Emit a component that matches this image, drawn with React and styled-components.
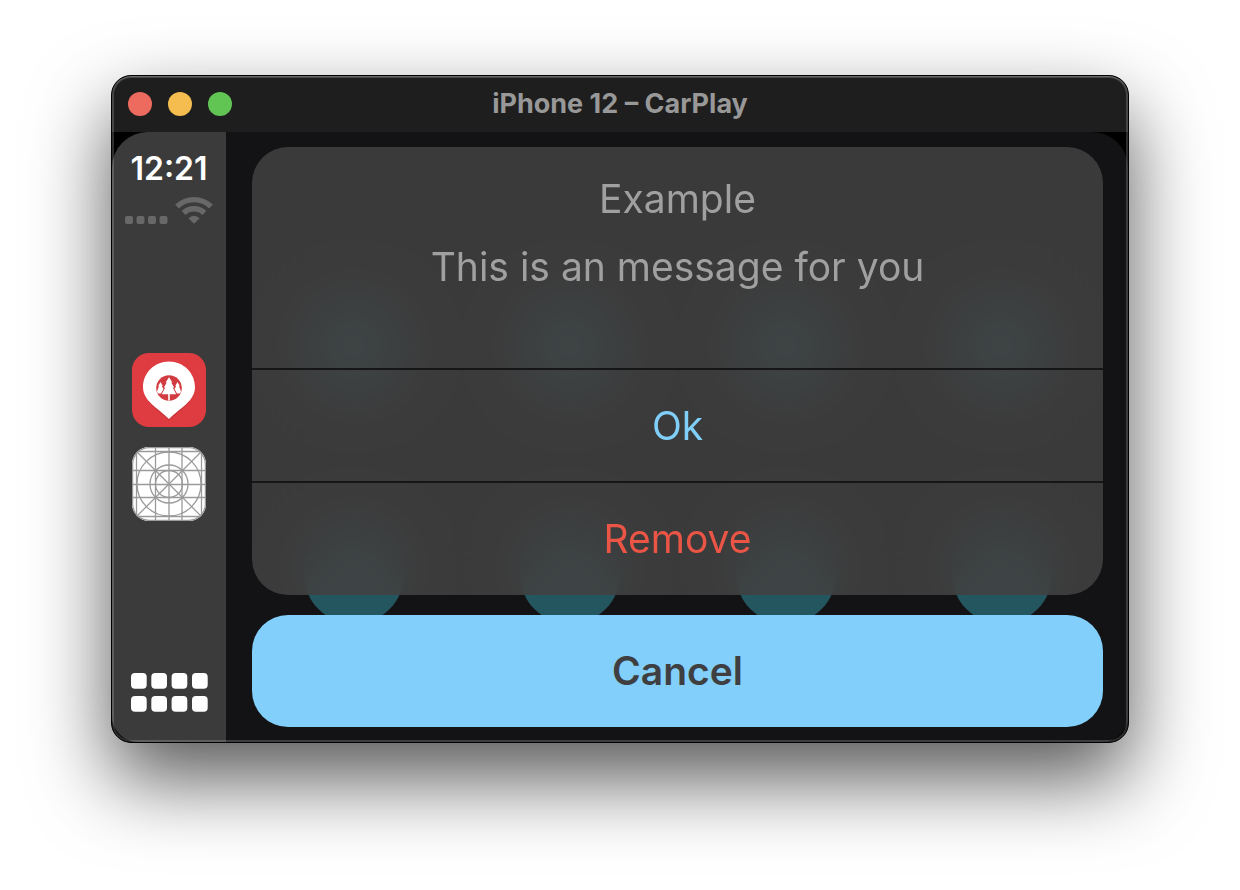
import React from "react";
import styled, { createGlobalStyle } from "styled-components";

const GlobalStyle = createGlobalStyle`
  *, *::before, *::after { box-sizing: border-box; }
  body {
    margin: 0;
    background: #fff;
    font-family: Inter, "Liberation Sans", sans-serif;
  }
  button {
    margin: 0;
    padding: 0;
    border: 0;
    background: none;
    font: inherit;
    color: inherit;
    cursor: pointer;
  }
  h1, h2, p { margin: 0; font-size: inherit; font-weight: inherit; }
  svg { display: block; }
`;

const Desktop = styled.main`
  min-height: 100vh;
  padding: 75px 111px 147px;
`;

const WindowShadow = styled.div`
  border-radius: 20px;
  box-shadow: 0 36px 80px rgba(0, 0, 0, 0.66);
`;

const Window = styled.section`
  position: relative;
  border: 1px solid #000;
  border-radius: 20px;
  background: #000;
  overflow: hidden;

  &::after {
    content: "";
    position: absolute;
    inset: 0;
    border-radius: 19px;
    box-shadow: inset 0 1px 0 rgba(255, 255, 255, 0.2),
      inset 0 0 0 2px rgba(255, 255, 255, 0.18);
    pointer-events: none;
  }
`;

const TitleBar = styled.header`
  display: grid;
  grid-template-columns: 1fr auto 1fr;
  align-items: center;
  height: 56px;
  padding: 0 16px;
  background: #1e1e1e;
`;

const TrafficLights = styled.div`
  display: flex;
  gap: 16px;
`;

const TrafficLight = styled.button`
  width: 24px;
  height: 24px;
  border-radius: 50%;
  background: ${(p) => p.$color};
`;

const WindowTitle = styled.h1`
  font-size: 27px;
  line-height: 32px;
  font-weight: 700;
  color: #989898;
`;

const Screen = styled.div`
  display: flex;
  border-radius: 36px 36px 26px 26px;
  overflow: hidden;
  background: #131315;
`;

const Sidebar = styled.aside`
  flex: none;
  display: flex;
  flex-direction: column;
  align-items: center;
  justify-content: space-between;
  width: 114px;
  padding: 19px 0 30px;
  background: #3b3b3b;
`;

const Status = styled.div`
  display: flex;
  flex-direction: column;
  align-items: center;
  gap: 9px;
`;

const Clock = styled.time`
  font-size: 32px;
  line-height: 36px;
  font-weight: 600;
  color: #fff;
`;

const Connectivity = styled.div`
  display: flex;
  align-items: flex-end;
  gap: 7px;
`;

const RecentApps = styled.nav`
  display: flex;
  flex-direction: column;
  gap: 20px;
  padding-bottom: 24px;
`;

const AppButton = styled.button`
  width: 74px;
  height: 74px;
  border-radius: 17px;
  overflow: hidden;
`;

const Stage = styled.div`
  flex: 1;
  display: grid;
  min-width: 0;
`;

const HomeGrid = styled.div`
  grid-area: 1 / 1;
  display: grid;
  grid-template-columns: repeat(4, 1fr);
  align-content: start;
  justify-items: center;
  row-gap: 128px;
  padding: 164px 18px 0 20px;
`;

const HomeTile = styled.span`
  width: 100px;
  height: 100px;
  border-radius: 50%;
  background: #24565f;
`;

const ActionSheet = styled.div`
  grid-area: 1 / 1;
  display: flex;
  flex-direction: column;
  gap: 20px;
  min-width: 0;
  padding: 15px 25px 15px 26px;
`;

const Panel = styled.div`
  padding-bottom: 1px;
  border-radius: 36px;
  overflow: hidden;
  background: rgba(67, 66, 66, 0.85);
  backdrop-filter: blur(28px);
`;

const Message = styled.div`
  display: flex;
  flex-direction: column;
  align-items: center;
  gap: 20px;
  min-height: 221px;
  padding: 28px 24px;
  font-size: 39px;
  line-height: 48px;
  text-align: center;
  color: #a0a0a0;
`;

const Action = styled.button`
  display: block;
  width: 100%;
  height: 113px;
  border-top: 2px solid #161616;
  font-size: 39px;
  line-height: 48px;
  color: ${(p) => (p.$destructive ? "#eb5545" : "#7fcff9")};
`;

const CancelButton = styled.button`
  height: 112px;
  border-radius: 36px;
  background: #81cffa;
  font-size: 39px;
  line-height: 48px;
  font-weight: 600;
  color: #3f3f41;
`;

const SignalIcon = () => (
  <svg width="43" height="8" viewBox="0 0 43 8" fill="#686868" aria-label="No signal">
    <rect width="8" height="8" rx="2" />
    <rect x="11.5" width="8" height="8" rx="2" />
    <rect x="23" width="8" height="8" rx="2" />
    <rect x="34.5" width="8" height="8" rx="2" />
  </svg>
);

const WifiIcon = () => (
  <svg width="38" height="28" viewBox="0 0 38 28" aria-label="Wi-Fi">
    <g fill="none" stroke="#686868" strokeWidth="5.4">
      <path d="M2 10.5 A24.5 24.5 0 0 1 36 10.5" />
      <path d="M8.6 17 A15 15 0 0 1 29.4 17" />
    </g>
    <path fill="#686868" d="M13.4 22.2 Q19 17.2 24.6 22.2 L19 27.8 Z" />
  </svg>
);

const ParkIcon = () => (
  <svg width="74" height="74" viewBox="0 0 74 74">
    <rect width="74" height="74" fill="#de3c40" />
    <path
      fill="#b42a30"
      opacity=".45"
      d="M16 48 C22 56 30 61 37 67.5 C44 61 52 56 58 48 Z"
    />
    <path
      fill="#fff"
      d="M37 8.5 C22.5 8.5 11 20 11 34 C11 48 26 55 37 66 C48 55 63 48 63 34 C63 20 51.5 8.5 37 8.5 Z"
    />
    <circle cx="37" cy="35" r="12.8" fill="#d23b40" />
    <g fill="#fff">
      <path d="M37 24.2 L40.4 29.5 H39.2 L42.2 34.5 H40.8 L44.2 41.2 H37.8 V47.5 H36.2 V41.2 H29.8 L33.2 34.5 H31.8 L34.8 29.5 H33.6 Z" />
      <path d="M28.5 29 L30.8 33 H29.8 L31.5 36 L29 40.5 H25.8 L25 38.5 L27 33 H26.2 Z" />
      <path d="M45.5 29 L43.2 33 H44.2 L42.5 36 L45 40.5 H48.2 L49 38.5 L47 33 H47.8 Z" />
    </g>
  </svg>
);

const TemplateIcon = () => (
  <svg width="74" height="74" viewBox="0 0 74 74">
    <rect width="74" height="74" fill="#fff" />
    <g fill="none" stroke="#9a9a9a" strokeWidth="1.3">
      <rect x=".6" y=".6" width="72.8" height="72.8" rx="16.5" />
      <path d="M4.5 0V74M23.5 0V74M37 0V74M50 0V74M69.5 0V74" />
      <path d="M0 4.5H74M0 23.5H74M0 37.5H74M0 50.5H74M0 69.5H74" />
      <path d="M4 4 L70 70 M70 4 L4 70" />
      <circle cx="37" cy="37" r="32" />
      <circle cx="37" cy="37" r="19" />
      <circle cx="37" cy="37" r="13.5" />
    </g>
  </svg>
);

const DashboardIcon = () => (
  <svg width="77" height="39" viewBox="0 0 77 39" fill="#fff">
    {[0, 23].map((y) =>
      [0, 20.3, 40.6, 61].map((x) => (
        <rect key={`${x}-${y}`} x={x} y={y} width="15.7" height="15.7" rx="4" />
      ))
    )}
  </svg>
);

const homeTiles = [1, 2, 3, 4, 5, 6, 7, 8];

export default function App() {
  return (
    <>
      <GlobalStyle />
      <Desktop>
        <WindowShadow>
          <Window>
            <TitleBar>
              <TrafficLights>
                <TrafficLight $color="#ed6a5e" aria-label="Close" />
                <TrafficLight $color="#f5bd4f" aria-label="Minimize" />
                <TrafficLight $color="#61c554" aria-label="Zoom" />
              </TrafficLights>
              <WindowTitle>iPhone 12 – CarPlay</WindowTitle>
            </TitleBar>
            <Screen>
              <Sidebar>
                <Status>
                  <Clock>12:21</Clock>
                  <Connectivity>
                    <SignalIcon />
                    <WifiIcon />
                  </Connectivity>
                </Status>
                <RecentApps aria-label="Recent apps">
                  <AppButton aria-label="Parks">
                    <ParkIcon />
                  </AppButton>
                  <AppButton aria-label="Example app">
                    <TemplateIcon />
                  </AppButton>
                </RecentApps>
                <button aria-label="Dashboard">
                  <DashboardIcon />
                </button>
              </Sidebar>
              <Stage>
                <HomeGrid aria-hidden="true">
                  {homeTiles.map((tile) => (
                    <HomeTile key={tile} />
                  ))}
                </HomeGrid>
                <ActionSheet role="dialog" aria-labelledby="sheet-title">
                  <Panel>
                    <Message>
                      <h2 id="sheet-title">Example</h2>
                      <p>This is an message for you</p>
                    </Message>
                    <Action>Ok</Action>
                    <Action $destructive>Remove</Action>
                  </Panel>
                  <CancelButton>Cancel</CancelButton>
                </ActionSheet>
              </Stage>
            </Screen>
          </Window>
        </WindowShadow>
      </Desktop>
    </>
  );
}
